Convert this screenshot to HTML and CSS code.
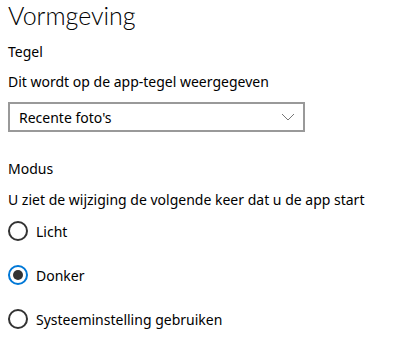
FILE: index.html
```html
<!DOCTYPE html>
<html lang="nl">

<head>
    <meta charset="UTF-8">
    <meta name="viewport" content="width=device-width, initial-scale=1.0">
    <title>Vormgeving</title>
    <link rel="stylesheet" href="styles.css">
</head>

<body>
    <div class="settings">
        <h1 class="title">Vormgeving</h1>

        <!-- Tegel -->
        <div class="group-label">Tegel</div>
        <div class="desc">Dit wordt op de app-tegel weergegeven</div>
        <div class="select">
            <span>Recente foto's</span>
            <svg class="chevron" width="14" height="8" viewBox="0 0 14 8">
                <path d="M1 1 L7 7 L13 1" fill="none" stroke="#777" stroke-width="1"/>
            </svg>
        </div>

        <!-- Modus -->
        <div class="group-label modus">Modus</div>
        <div class="desc modus-desc">U ziet de wijziging de volgende keer dat u de app start</div>
        <div class="radios">
            <div class="radio">
                <span class="dot"></span>
                <span>Licht</span>
            </div>
            <div class="radio checked">
                <span class="dot"></span>
                <span>Donker</span>
            </div>
            <div class="radio">
                <span class="dot"></span>
                <span>Systeeminstelling gebruiken</span>
            </div>
        </div>
    </div>
</body>

</html>
```

FILE: styles.css
```css
* {
    margin: 0;
    padding: 0;
    box-sizing: border-box;
}

body {
    background: #fff;
    color: #000;
    font-family: 'Noto Sans', 'Open Sans', sans-serif;
    font-size: 14px;
}

.settings {
    padding: 0 8px;
}

.title {
    font-family: 'Lato', 'Noto Sans', sans-serif;
    font-size: 25px;
    font-weight: 300;
    line-height: 30px;
}

.group-label {
    line-height: 20px;
    margin-top: 12px;
}

.group-label.modus {
    margin-top: 27px;
}

.desc {
    line-height: 20px;
    margin-top: 10px;
}

.desc.modus-desc {
    margin-top: 11px;
}

/* Dropdown */
.select {
    width: 297px;
    height: 30px;
    margin-top: 10px;
    border: 2px solid #999;
    display: flex;
    align-items: center;
    justify-content: space-between;
    padding: 0 8px 0 9px;
}

.chevron {
    display: block;
}

/* Radio buttons */
.radios {
    display: flex;
    flex-direction: column;
    gap: 24px;
    margin-top: 11px;
}

.radio {
    display: flex;
    align-items: center;
    gap: 8px;
    height: 20px;
}

.dot {
    width: 20px;
    height: 20px;
    border: 2px solid #333;
    border-radius: 50%;
    display: flex;
    align-items: center;
    justify-content: center;
}

.radio.checked .dot {
    border-color: #0078d7;
}

.radio.checked .dot::after {
    content: '';
    width: 10px;
    height: 10px;
    border-radius: 50%;
    background: #333;
}
```
